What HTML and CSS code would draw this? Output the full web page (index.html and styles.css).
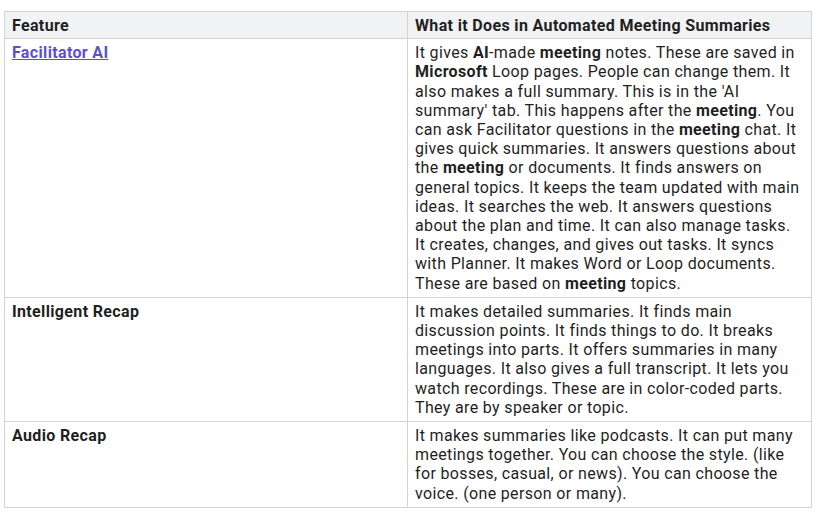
FILE: index.html
```html
<!DOCTYPE html>
<html>
<head>
<meta charset="utf-8">
<link rel="stylesheet" href="styles.css">
</head>
<body>
<table class="grid">
  <thead>
    <tr>
      <th class="col-a">Feature</th>
      <th class="col-b">What it Does in Automated Meeting Summaries</th>
    </tr>
  </thead>
  <tbody>
    <tr>
      <td class="name"><a href="#" class="link">Facilitator AI</a></td>
      <td>It gives <b>AI</b>-made <b>meeting</b> notes. These are saved in <b>Microsoft</b> Loop pages. People can change them. It also makes a full summary. This is in the 'AI summary' tab. This happens after the <b>meeting</b>. You can ask Facilitator questions in the <b>meeting</b> chat. It gives quick summaries. It answers questions about the <b>meeting</b> or documents. It finds answers on general topics. It keeps the team updated with main ideas. It searches the web. It answers questions about the plan and time. It can also manage tasks. It creates, changes, and gives out tasks. It syncs with Planner. It makes Word or Loop documents. These are based on <b>meeting</b> topics.</td>
    </tr>
    <tr>
      <td class="name">Intelligent Recap</td>
      <td>It makes detailed summaries. It finds main discussion points. It finds things to do. It breaks meetings into parts. It offers summaries in many languages. It also gives a full transcript. It lets you watch recordings. These are in color-coded parts. They are by speaker or topic.</td>
    </tr>
    <tr>
      <td class="name">Audio Recap</td>
      <td>It makes summaries like podcasts. It can put many meetings together. You can choose the style. (like for bosses, casual, or news). You can choose the voice. (one person or many).</td>
    </tr>
  </tbody>
</table>
</body>
</html>
```
FILE: styles.css
```css
html, body {
  margin: 0;
  padding: 0;
  background: #ffffff;
}
body {
  font-family: Roboto, "Liberation Sans", sans-serif;
  font-size: 16px;
  letter-spacing: 0.35px;
  color: #1f1f1f;
}
.grid {
  border-collapse: collapse;
  margin: 11px 0 0 4px;
  width: 808px;
  table-layout: fixed;
}
.grid th,
.grid td {
  border: 1px solid #d3d3d3;
  text-align: left;
  vertical-align: top;
  line-height: 19.2px;
}
.grid th {
  background: #f1f2f4;
  font-weight: 700;
  padding: 4px 7px 3px 7px;
}
.grid td {
  padding: 4px 7px 4px 7px;
}
.col-a {
  width: 388px;
}
.name {
  font-weight: 700;
}
.grid b {
  font-weight: 700;
}
.link {
  color: #5b4fd0;
  text-decoration: underline;
}
```
